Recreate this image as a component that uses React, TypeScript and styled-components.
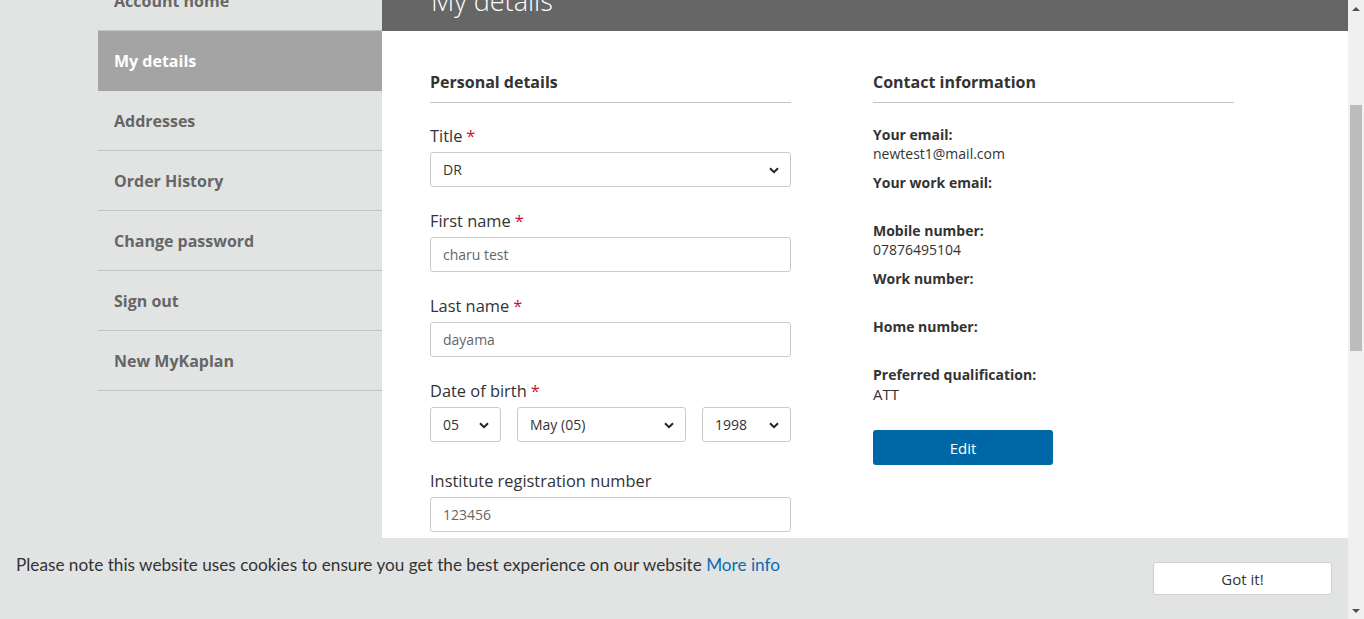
import React, { useLayoutEffect, useRef } from 'react';
import styled, { createGlobalStyle } from 'styled-components';

const GlobalStyle = createGlobalStyle`
  html, body {
    margin: 0;
    padding: 0;
    height: 100%;
    overflow: hidden;
  }
  body {
    font-family: "Open Sans", "Liberation Sans", sans-serif;
    background: #e2e4e3;
    color: #333;
  }
  * {
    box-sizing: border-box;
  }
`;

// ventana completa: contenido + barra de scroll dibujada
const Frame = styled.div`
  display: flex;
  height: 100vh;
`;

const Viewport = styled.div`
  position: relative;
  flex: 1;
  overflow: hidden;
`;

const Scroller = styled.div`
  height: 100%;
  overflow-y: scroll;
  scrollbar-width: none;
  &::-webkit-scrollbar {
    display: none;
  }
`;

const PageRow = styled.div`
  display: flex;
  align-items: flex-start;
  padding-left: 98px;
`;

// menú lateral
const Sidebar = styled.nav`
  width: 284px;
  flex-shrink: 0;
  margin-top: 6px;
`;

const NavItem = styled.a<{ $active?: boolean }>`
  display: flex;
  align-items: center;
  height: 60px;
  padding-left: 16px;
  border-bottom: 1px solid ${p => (p.$active ? '#a4a4a4' : '#c3c5c4')};
  background: ${p => (p.$active ? '#a4a4a4' : 'transparent')};
  color: ${p => (p.$active ? '#fff' : '#666')};
  font-size: 16px;
  font-weight: 700;
  text-decoration: none;
  cursor: pointer;
`;

// panel principal
const Main = styled.main`
  flex: 1;
  background: #fff;
  min-height: 1400px;
`;

const MainHeader = styled.header`
  background: #666;
  height: 66px;
  padding: 19px 49px 13px;
`;

const PageTitle = styled.h1`
  margin: 0;
  font-size: 27px;
  line-height: 34px;
  font-weight: 300;
  color: #fff;
`;

const Columns = styled.div`
  display: grid;
  grid-template-columns: 361px 361px;
  column-gap: 82px;
  padding: 40px 48px 0;
`;

const Section = styled.section`
  display: flex;
  flex-direction: column;
`;

const SectionTitle = styled.h2`
  margin: 0 0 21px;
  padding-bottom: 9px;
  border-bottom: 1px solid #c3c5c4;
  font-size: 16px;
  line-height: 22px;
  font-weight: 700;
  color: #333;
`;

const Field = styled.div<{ $extra?: number }>`
  display: flex;
  flex-direction: column;
  margin-bottom: ${p => 22 + (p.$extra || 0)}px;
`;

const Label = styled.label`
  font-size: 16.4px;
  line-height: 24px;
  color: #333;
  margin-bottom: 4px;
`;

const Required = styled.span`
  color: #c8102e;
  margin-left: 4px;
`;

const TextInput = styled.input`
  height: 35px;
  width: 100%;
  padding: 0 12px;
  border: 1px solid #cbcbcb;
  border-radius: 3px;
  font-family: inherit;
  font-size: 14px;
  color: #666;
  background: #fff;
  outline: none;
`;

const SelectRow = styled.div`
  display: flex;
  gap: 16px;
`;

const SelectWrap = styled.div<{ $width?: number }>`
  position: relative;
  flex: ${p => (p.$width ? `0 0 ${p.$width}px` : '1')};
`;

const Select = styled.select`
  appearance: none;
  height: 35px;
  width: 100%;
  padding: 0 30px 0 12px;
  border: 1px solid #cbcbcb;
  border-radius: 3px;
  background: #fff;
  font-family: inherit;
  font-size: 14px;
  color: #333;
  outline: none;
`;

const Chevron = styled.svg`
  position: absolute;
  right: 12px;
  top: 50%;
  margin-top: -3px;
  pointer-events: none;
`;

const InfoList = styled.dl`
  margin: 1px 0 0;
`;

const InfoItem = styled.div`
  margin-bottom: 10px;
`;

const InfoLabel = styled.dt`
  font-size: 14px;
  line-height: 19px;
  font-weight: 700;
  color: #333;
`;

const InfoValue = styled.dd<{ $large?: boolean }>`
  margin: 0;
  min-height: 19px;
  font-size: ${p => (p.$large ? '15px' : '14px')};
  line-height: ${p => (p.$large ? '21px' : '19px')};
  color: #333;
`;

const EditButton = styled.button`
  margin-top: 15px;
  width: 180px;
  height: 35px;
  border: none;
  border-radius: 3px;
  background: #0067a7;
  color: #fff;
  font-family: inherit;
  font-size: 15px;
  cursor: pointer;
`;

// aviso de cookies fijo abajo
const CookieBar = styled.div`
  position: absolute;
  left: 0;
  right: 0;
  bottom: 0;
  height: 81px;
  background: #e2e4e3;
  display: flex;
  align-items: flex-start;
  justify-content: space-between;
  padding: 15px 16px 0;
`;

const CookieText = styled.p`
  margin: 0;
  font-family: "Lato", "Open Sans", sans-serif;
  font-size: 17.2px;
  line-height: 24px;
  color: #333;
`;

const MoreInfo = styled.a`
  color: #0a6cb2;
  text-decoration: none;
`;

const GotItButton = styled.button`
  margin-top: 9px;
  width: 179px;
  height: 33px;
  background: #fff;
  border: 1px solid #cfcfcf;
  border-radius: 3px;
  font-family: inherit;
  font-size: 15px;
  color: #333;
  cursor: pointer;
`;

// barra de scroll
const ScrollBar = styled.div`
  width: 16px;
  flex-shrink: 0;
  background: #f0f0f0;
  display: flex;
  flex-direction: column;
`;

const ArrowBox = styled.div`
  height: 17px;
  display: flex;
  align-items: center;
  justify-content: center;
`;

const Arrow = styled.div<{ $down?: boolean }>`
  width: 0;
  height: 0;
  border-left: 4px solid transparent;
  border-right: 4px solid transparent;
  ${p =>
    p.$down ? 'border-top: 4px solid #505050;' : 'border-bottom: 4px solid #505050;'}
`;

const Track = styled.div`
  flex: 1;
  padding: 88px 2px 0;
`;

const Thumb = styled.div`
  height: 246px;
  background: #bcbcbc;
`;

const ChevronIcon = () => (
  <Chevron width="10" height="7" viewBox="0 0 10 7">
    <path d="M1 1.2 L5 5.2 L9 1.2" fill="none" stroke="#222" strokeWidth="2" />
  </Chevron>
);

const navItems = [
  'Account home',
  'My details',
  'Addresses',
  'Order History',
  'Change password',
  'Sign out',
  'New MyKaplan',
];

const contactInfo = [
  { label: 'Your email:', value: 'newtest1@mail.com' },
  { label: 'Your work email:', value: '' },
  { label: 'Mobile number:', value: '07876495104' },
  { label: 'Work number:', value: '' },
  { label: 'Home number:', value: '' },
  { label: 'Preferred qualification:', value: 'ATT', large: true },
];

function App() {
  const scrollRef = useRef<HTMLDivElement>(null);

  // la captura está desplazada un poco hacia abajo
  useLayoutEffect(() => {
    if (scrollRef.current) scrollRef.current.scrollTop = 35;
  }, []);

  return (
    <>
      <GlobalStyle />
      <Frame>
        <Viewport>
          <Scroller ref={scrollRef}>
            <PageRow>
              <Sidebar>
                {navItems.map(item => (
                  <NavItem key={item} $active={item === 'My details'}>
                    {item}
                  </NavItem>
                ))}
              </Sidebar>
              <Main>
                <MainHeader>
                  <PageTitle>My details</PageTitle>
                </MainHeader>
                <Columns>
                  <Section>
                    <SectionTitle>Personal details</SectionTitle>
                    <Field>
                      <Label>
                        Title<Required>*</Required>
                      </Label>
                      <SelectWrap>
                        <Select defaultValue="DR">
                          <option>MR</option>
                          <option>MRS</option>
                          <option>MS</option>
                          <option>DR</option>
                        </Select>
                        <ChevronIcon />
                      </SelectWrap>
                    </Field>
                    <Field>
                      <Label>
                        First name<Required>*</Required>
                      </Label>
                      <TextInput defaultValue="charu test" />
                    </Field>
                    <Field>
                      <Label>
                        Last name<Required>*</Required>
                      </Label>
                      <TextInput defaultValue="dayama" />
                    </Field>
                    <Field $extra={5}>
                      <Label>
                        Date of birth<Required>*</Required>
                      </Label>
                      <SelectRow>
                        <SelectWrap $width={71}>
                          <Select defaultValue="05">
                            <option>05</option>
                          </Select>
                          <ChevronIcon />
                        </SelectWrap>
                        <SelectWrap>
                          <Select defaultValue="May (05)">
                            <option>May (05)</option>
                          </Select>
                          <ChevronIcon />
                        </SelectWrap>
                        <SelectWrap $width={89}>
                          <Select defaultValue="1998">
                            <option>1998</option>
                          </Select>
                          <ChevronIcon />
                        </SelectWrap>
                      </SelectRow>
                    </Field>
                    <Field>
                      <Label>Institute registration number</Label>
                      <TextInput defaultValue="123456" />
                    </Field>
                  </Section>
                  <Section>
                    <SectionTitle>Contact information</SectionTitle>
                    <InfoList>
                      {contactInfo.map(info => (
                        <InfoItem key={info.label}>
                          <InfoLabel>{info.label}</InfoLabel>
                          <InfoValue $large={info.large}>{info.value}</InfoValue>
                        </InfoItem>
                      ))}
                    </InfoList>
                    <div>
                      <EditButton>Edit</EditButton>
                    </div>
                  </Section>
                </Columns>
              </Main>
            </PageRow>
          </Scroller>
          <CookieBar>
            <CookieText>
              Please note this website uses cookies to ensure you get the best experience on our
              website <MoreInfo href="#">More info</MoreInfo>
            </CookieText>
            <GotItButton>Got it!</GotItButton>
          </CookieBar>
        </Viewport>
        <ScrollBar>
          <ArrowBox>
            <Arrow />
          </ArrowBox>
          <Track>
            <Thumb />
          </Track>
          <ArrowBox>
            <Arrow $down />
          </ArrowBox>
        </ScrollBar>
      </Frame>
    </>
  );
}

export default App;
